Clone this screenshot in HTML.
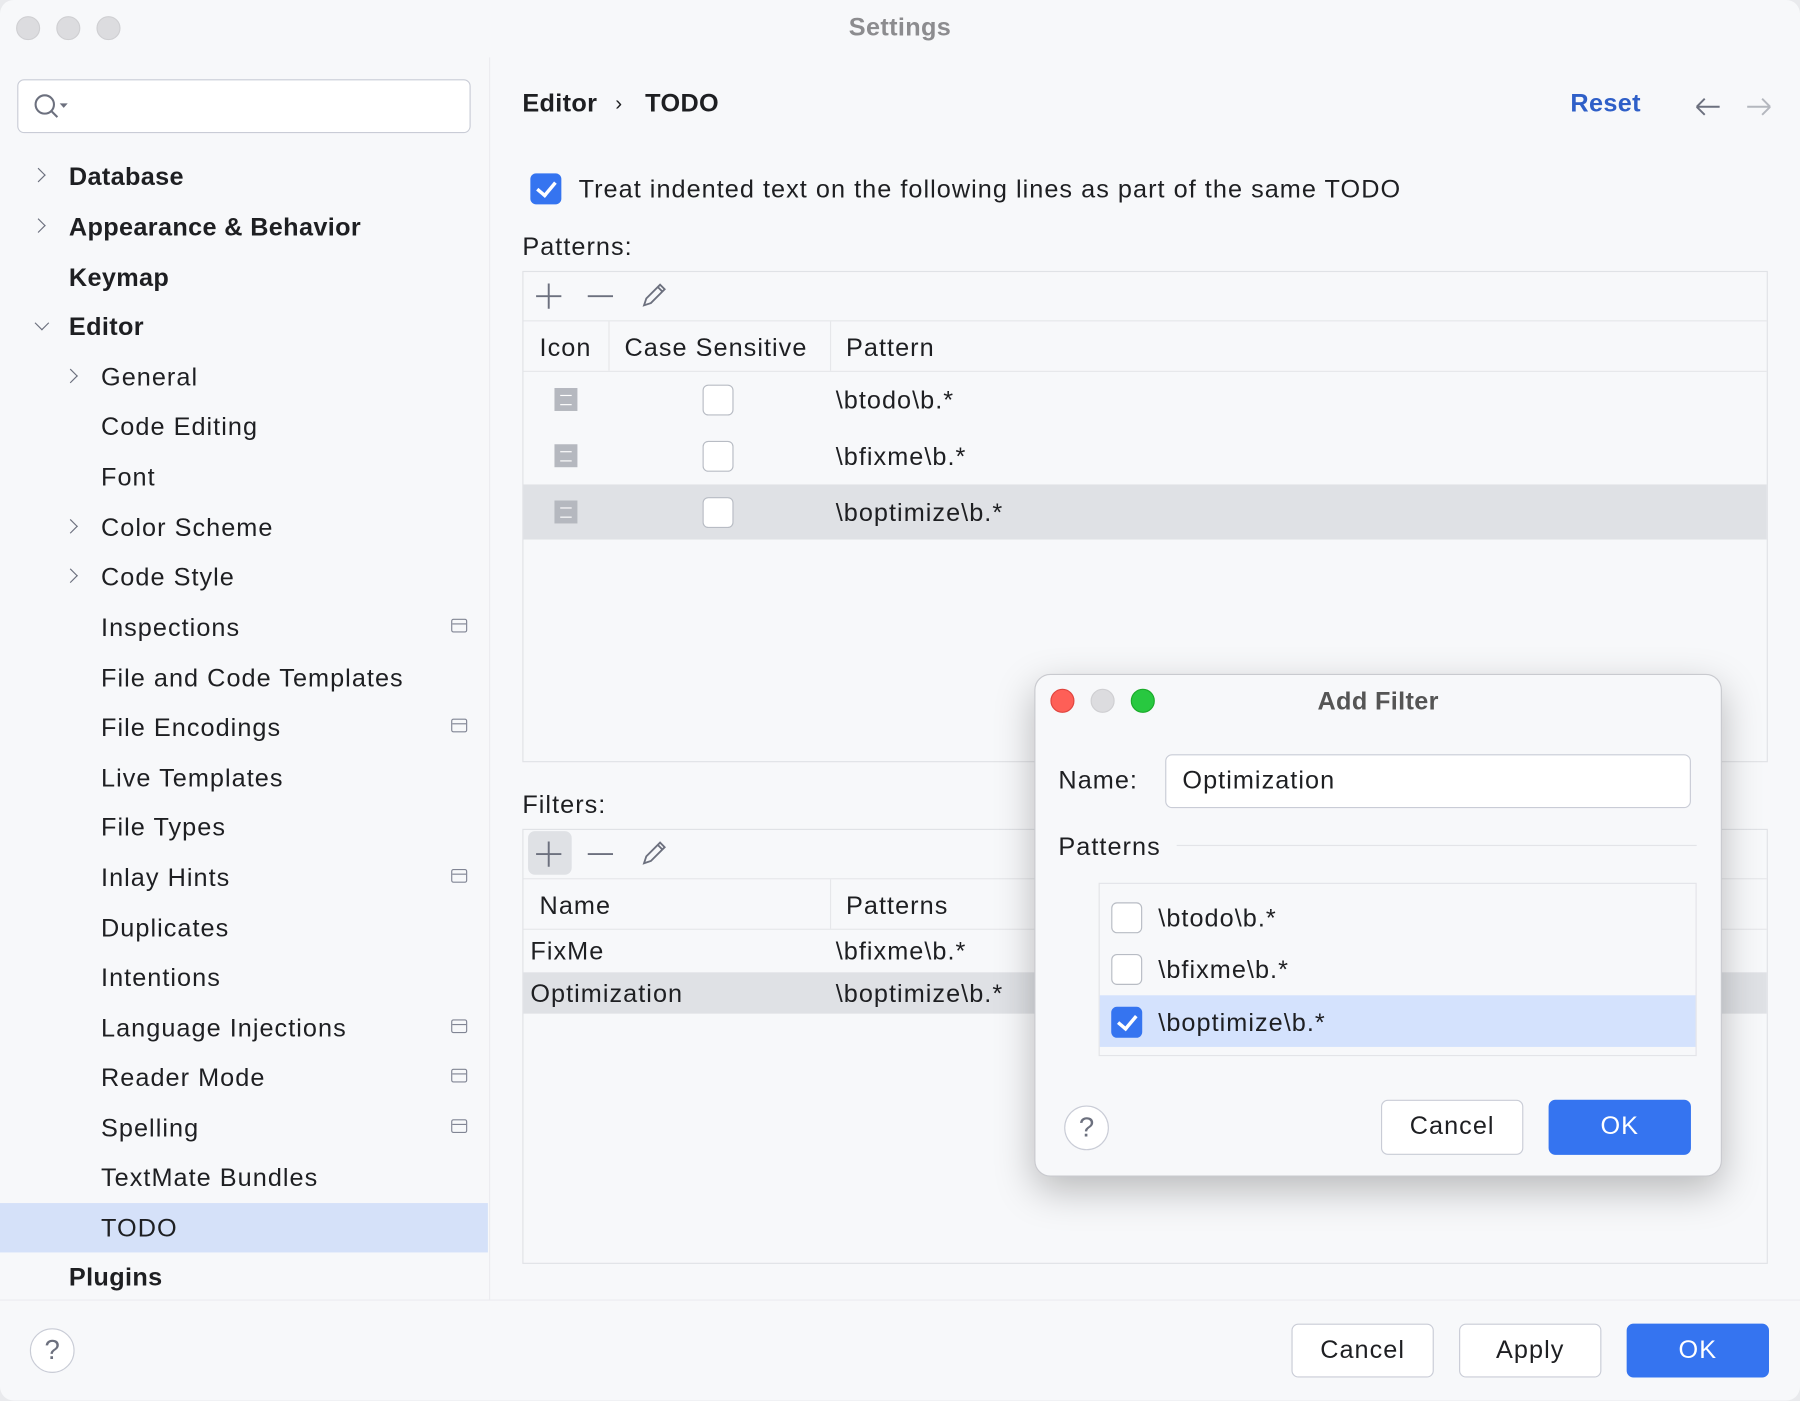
<!DOCTYPE html>
<html><head><meta charset="utf-8"><style>
*{margin:0;padding:0;box-sizing:border-box}
html,body{width:1800px;height:1400px;overflow:hidden;background:#e9eaed}
#w{position:absolute;left:0;top:0;width:1568px;height:1220px;transform:scale(1.14796);transform-origin:0 0;background:#f7f8fa;border-radius:12px;font-family:"Liberation Sans",sans-serif;color:#1e1f22;font-size:22px;letter-spacing:0.9px;overflow:hidden}
.a{position:absolute;white-space:nowrap}
.t{line-height:26px;transform:translateY(-12px)}
.b{font-weight:bold;letter-spacing:0.3px}
.dot{position:absolute;width:21px;height:21px;border-radius:50%;background:#dcdcdf;border:1px solid #cfcfd2}
.chev{position:absolute;width:9px;height:9px;border-right:1.6px solid #6c707e;border-bottom:1.6px solid #6c707e}
.r{transform:rotate(-45deg)}.d{transform:rotate(45deg)}
.mini{position:absolute;width:14px;height:12px;border:1.5px solid #818594;border-radius:2px}
.mini:after{content:"";position:absolute;left:0;right:0;top:3px;border-top:1.5px solid #818594}
.cb{position:absolute;width:27px;height:27px;border:1.5px solid #b8bcc4;border-radius:5px;background:#fff}
.cbon{position:absolute;width:27px;height:27px;border-radius:5px;background:#3574f0}
.cbon:after{content:"";position:absolute;left:9px;top:4px;width:7px;height:13px;border-right:3px solid #fff;border-bottom:3px solid #fff;transform:rotate(40deg)}
.btn{position:absolute;border:1.5px solid #c9ccd6;border-radius:6px;background:#fff;text-align:center;line-height:44px}
.ok{background:#3574f0;border-color:#3574f0;color:#fff}
.help{position:absolute;width:39px;height:39px;border-radius:50%;border:1.5px solid #c9ccd6;background:#fff;text-align:center;line-height:38px;color:#6c707e;font-size:24px;letter-spacing:0}
.icn{position:absolute;width:20px;height:20px;background:#b5b8bf}
.icn:after{content:"";position:absolute;left:5px;right:5px;top:6px;height:7px;border-top:1.5px solid #fff;border-bottom:1.5px solid #fff}
</style></head><body><div id="w">
<div class="dot" style="left:14px;top:14px"></div><div class="dot" style="left:49px;top:14px"></div><div class="dot" style="left:84px;top:14px"></div>
<div class="a t b" style="left:0;width:1568px;text-align:center;top:23px;color:#8c8c8f">Settings</div>
<div class="a" style="left:426px;top:50px;width:1px;height:1082px;background:#ebecf0"></div>
<div class="a" style="left:15px;top:69px;width:395px;height:47px;background:#fff;border:1.5px solid #c9ccd6;border-radius:6px"></div>
<svg class="a" style="left:28px;top:80px" width="36" height="26"><circle cx="11" cy="11" r="8" fill="none" stroke="#6c707e" stroke-width="1.8"/><path d="M17 17l5 5" stroke="#6c707e" stroke-width="1.8"/><path d="M24 10h7l-3.5 4z" fill="#6c707e"/></svg>
<div class="chev r" style="left:29px;top:148px"></div><div class="a t b" style="left:60px;top:153px">Database</div>
<div class="chev r" style="left:29px;top:192px"></div><div class="a t b" style="left:60px;top:197px">Appearance &amp; Behavior</div>
<div class="a t b" style="left:60px;top:241px">Keymap</div>
<div class="chev d" style="left:32px;top:277px"></div><div class="a t b" style="left:60px;top:284px">Editor</div>
<div class="chev r" style="left:57px;top:323px"></div><div class="a t" style="left:88px;top:328px">General</div>
<div class="a t" style="left:88px;top:371px">Code Editing</div>
<div class="a t" style="left:88px;top:415px">Font</div>
<div class="chev r" style="left:57px;top:454px"></div><div class="a t" style="left:88px;top:459px">Color Scheme</div>
<div class="chev r" style="left:57px;top:497px"></div><div class="a t" style="left:88px;top:502px">Code Style</div>
<div class="a t" style="left:88px;top:546px">Inspections</div><div class="mini" style="left:393px;top:539px"></div>
<div class="a t" style="left:88px;top:590px">File and Code Templates</div>
<div class="a t" style="left:88px;top:633px">File Encodings</div><div class="mini" style="left:393px;top:626px"></div>
<div class="a t" style="left:88px;top:677px">Live Templates</div>
<div class="a t" style="left:88px;top:720px">File Types</div>
<div class="a t" style="left:88px;top:764px">Inlay Hints</div><div class="mini" style="left:393px;top:757px"></div>
<div class="a t" style="left:88px;top:808px">Duplicates</div>
<div class="a t" style="left:88px;top:851px">Intentions</div>
<div class="a t" style="left:88px;top:895px">Language Injections</div><div class="mini" style="left:393px;top:888px"></div>
<div class="a t" style="left:88px;top:938px">Reader Mode</div><div class="mini" style="left:393px;top:931px"></div>
<div class="a t" style="left:88px;top:982px">Spelling</div><div class="mini" style="left:393px;top:975px"></div>
<div class="a t" style="left:88px;top:1025px">TextMate Bundles</div>
<div class="a" style="left:0;top:1048px;width:425px;height:43px;background:#d5e1f9"></div>
<div class="a t" style="left:88px;top:1069px">TODO</div>
<div class="a t b" style="left:60px;top:1112px">Plugins</div>
<div class="a" style="left:0;top:1132px;width:1568px;height:1px;background:#ebecf0"></div>
<div class="help" style="left:26px;top:1157px">?</div>
<div class="btn" style="left:1125px;top:1153px;width:124px;height:47px">Cancel</div>
<div class="btn" style="left:1271px;top:1153px;width:124px;height:47px">Apply</div>
<div class="btn ok" style="left:1417px;top:1153px;width:124px;height:47px">OK</div>
<div class="a t b" style="left:455px;top:89px">Editor</div>
<div class="a t" style="left:536px;top:89px;font-size:18px">›</div>
<div class="a t b" style="left:562px;top:89px">TODO</div>
<div class="a t b" style="left:1368px;top:89px;color:#2f5fc8">Reset</div>
<svg class="a" style="left:1476px;top:83px" width="70" height="22"><path d="M2 10h20M2 10l7-7M2 10l7 7" stroke="#6c707e" stroke-width="1.7" fill="none"/><path d="M46 10h20M66 10l-7-7M66 10l-7 7" stroke="#b4b7be" stroke-width="1.7" fill="none"/></svg>
<div class="cbon" style="left:462px;top:151px"></div>
<div class="a t" style="left:504px;top:164px">Treat indented text on the following lines as part of the same TODO</div>
<div class="a t" style="left:455px;top:214px">Patterns:</div>
<div class="a" style="left:455px;top:236px;width:1085px;height:428px;border:1px solid #e0e2e6"></div>
<div class="a" style="left:456px;top:279px;width:1083px;height:1px;background:#e6e7ea"></div>
<div class="a" style="left:456px;top:323px;width:1083px;height:1px;background:#e6e7ea"></div>
<div class="a" style="left:530px;top:280px;width:1px;height:43px;background:#e6e7ea"></div>
<div class="a" style="left:723px;top:280px;width:1px;height:43px;background:#e6e7ea"></div>
<svg class="a" style="left:465px;top:244px" width="120" height="28"><path d="M13 3v22M2 14h22" stroke="#6c707e" stroke-width="1.7"/><path d="M47 14h22" stroke="#6c707e" stroke-width="1.7"/><path d="M96 22l2-6 12-12 4 4-12 12z M108 6l4 4" stroke="#6c707e" stroke-width="1.6" fill="none"/></svg>
<div class="a t" style="left:470px;top:302px">Icon</div>
<div class="a t" style="left:544px;top:302px">Case Sensitive</div>
<div class="a t" style="left:737px;top:302px">Pattern</div>
<div class="a" style="left:456px;top:422px;width:1083px;height:48px;background:#dfe1e5"></div>
<div class="icn" style="left:483px;top:338px"></div><div class="cb" style="left:612px;top:335px"></div><div class="a t" style="left:728px;top:348px">\btodo\b.*</div>
<div class="icn" style="left:483px;top:387px"></div><div class="cb" style="left:612px;top:384px"></div><div class="a t" style="left:728px;top:397px">\bfixme\b.*</div>
<div class="icn" style="left:483px;top:436px"></div><div class="cb" style="left:612px;top:433px"></div><div class="a t" style="left:728px;top:446px">\boptimize\b.*</div>
<div class="a t" style="left:455px;top:700px">Filters:</div>
<div class="a" style="left:455px;top:722px;width:1085px;height:379px;border:1px solid #e0e2e6"></div>
<div class="a" style="left:456px;top:765px;width:1083px;height:1px;background:#e6e7ea"></div>
<div class="a" style="left:456px;top:809px;width:1083px;height:1px;background:#e6e7ea"></div>
<div class="a" style="left:723px;top:766px;width:1px;height:43px;background:#e6e7ea"></div>
<div class="a" style="left:460px;top:724px;width:38px;height:38px;background:#dfe1e5;border-radius:6px"></div>
<svg class="a" style="left:465px;top:730px" width="120" height="28"><path d="M13 3v22M2 14h22" stroke="#6c707e" stroke-width="1.7"/><path d="M47 14h22" stroke="#6c707e" stroke-width="1.7"/><path d="M96 22l2-6 12-12 4 4-12 12z M108 6l4 4" stroke="#6c707e" stroke-width="1.6" fill="none"/></svg>
<div class="a t" style="left:470px;top:788px">Name</div>
<div class="a t" style="left:737px;top:788px">Patterns</div>
<div class="a" style="left:456px;top:847px;width:1083px;height:36px;background:#dfe1e5"></div>
<div class="a t" style="left:462px;top:828px">FixMe</div><div class="a t" style="left:728px;top:828px">\bfixme\b.*</div>
<div class="a t" style="left:462px;top:865px">Optimization</div><div class="a t" style="left:728px;top:865px">\boptimize\b.*</div>
<div class="a" style="left:901px;top:587px;width:599px;height:438px;background:#f7f8fa;border:1px solid #c9cacf;border-radius:14px;box-shadow:0 12px 34px rgba(0,0,0,.25)"></div>
<div class="dot" style="left:915px;top:600px;background:#fe5f57;border-color:#e0443e"></div>
<div class="dot" style="left:950px;top:600px"></div>
<div class="dot" style="left:985px;top:600px;background:#28c840;border-color:#1aab29"></div>
<div class="a t b" style="left:901px;width:599px;text-align:center;top:610px;color:#555">Add Filter</div>
<div class="a t" style="left:922px;top:679px">Name:</div>
<div class="a" style="left:1015px;top:657px;width:458px;height:47px;background:#fff;border:1.5px solid #c9ccd6;border-radius:6px"></div>
<div class="a t" style="left:1030px;top:679px">Optimization</div>
<div class="a t" style="left:922px;top:737px">Patterns</div>
<div class="a" style="left:1025px;top:736px;width:453px;height:1px;background:#e3e4e8"></div>
<div class="a" style="left:957px;top:769px;width:521px;height:151px;border:1px solid #e3e4e8"></div>
<div class="a" style="left:958px;top:867px;width:519px;height:45px;background:#d4e2fd"></div>
<div class="cb" style="left:968px;top:786px"></div><div class="a t" style="left:1009px;top:799px">\btodo\b.*</div>
<div class="cb" style="left:968px;top:831px"></div><div class="a t" style="left:1009px;top:844px">\bfixme\b.*</div>
<div class="cbon" style="left:968px;top:877px"></div><div class="a t" style="left:1009px;top:890px">\boptimize\b.*</div>
<div class="help" style="left:927px;top:963px">?</div>
<div class="btn" style="left:1203px;top:958px;width:124px;height:48px">Cancel</div>
<div class="btn ok" style="left:1349px;top:958px;width:124px;height:48px">OK</div>
</div></body></html>
